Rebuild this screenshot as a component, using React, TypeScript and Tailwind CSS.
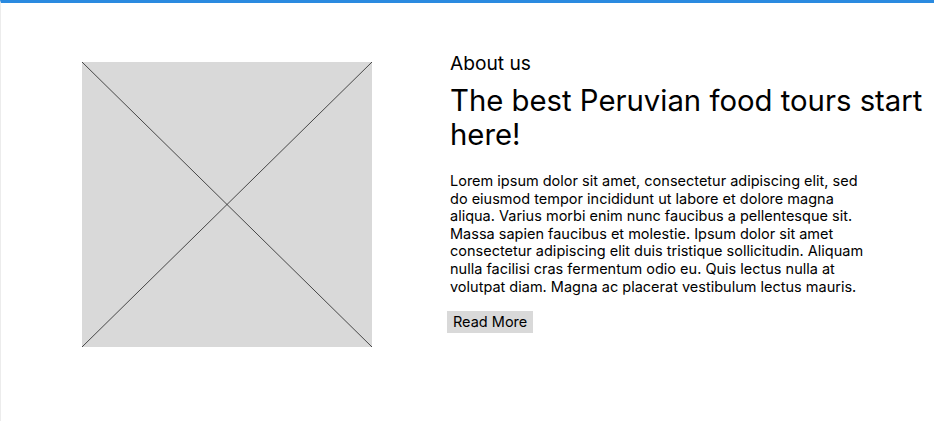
export default function App() {
  return (
    <div className="w-[934px] h-[421px] bg-white border-t-[3px] border-t-[#2a8ae0] border-l border-l-[#ececec] overflow-hidden" style={{ fontFamily: "Inter, 'Noto Sans', sans-serif" }}>
      <div className="flex items-start pt-[48px]">
        <div className="ml-[81px] mt-[11px] w-[290px] h-[285px] bg-[#d9d9d9] shrink-0">
          <svg width="290" height="285" viewBox="0 0 290 285" className="block">
            <line x1="0" y1="0" x2="290" y2="285" stroke="#222" strokeWidth="0.8" />
            <line x1="290" y1="0" x2="0" y2="285" stroke="#222" strokeWidth="0.8" />
          </svg>
        </div>
        <div className="ml-[78px] flex flex-col">
          <div className="text-[19.2px] leading-[24px] text-black">About us</div>
          <h1 className="mt-[9px] text-[29.3px] leading-[34px] text-black font-normal">The best Peruvian food tours start here!</h1>
          <p className="mt-[20px] w-[420px] text-[14.5px] leading-[17.6px] text-black">
            Lorem ipsum dolor sit amet, consectetur adipiscing elit, sed do eiusmod tempor incididunt ut labore et dolore magna aliqua. Varius morbi enim nunc faucibus a pellentesque sit. Massa sapien faucibus et molestie. Ipsum dolor sit amet consectetur adipiscing elit duis tristique sollicitudin. Aliquam nulla facilisi cras fermentum odio eu. Quis lectus nulla at volutpat diam. Magna ac placerat vestibulum lectus mauris.
          </p>
          <div className="mt-[14px] -ml-[3px]">
            <button className="bg-[#d9d9d9] px-[6px] h-[22px] text-[14.5px] leading-[22px] text-black">Read More</button>
          </div>
        </div>
      </div>
    </div>
  );
}
